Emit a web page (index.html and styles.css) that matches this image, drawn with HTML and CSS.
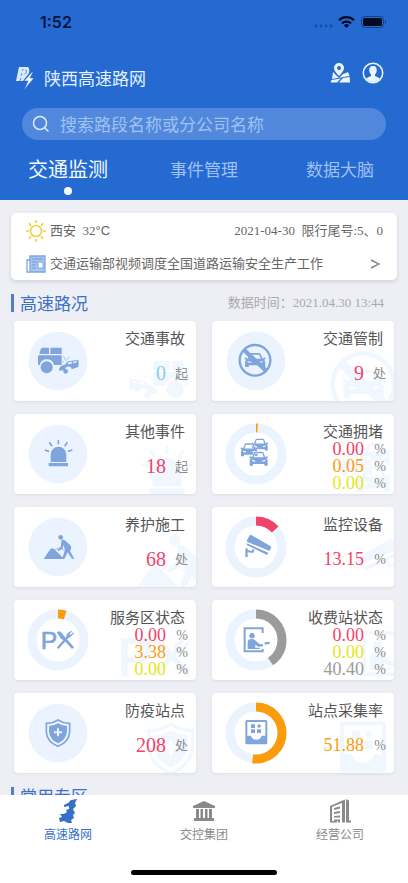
FILE: index.html
```html
<!DOCTYPE html>
<html lang="zh-CN">
<head>
<meta charset="utf-8">
<meta name="viewport" content="width=device-width, initial-scale=1">
<title>陕西高速路网</title>
<link rel="stylesheet" href="styles.css">
</head>
<body>
<svg class="sprite" aria-hidden="true">
  <defs>
    <g id="crash">
      <path d="M43 50H63V69H34L38 55Q39 50 43 50ZM67 50H101V69H67ZM32 73H101V102H78A22 22 0 0 0 35 102H32Q30 102 30 99V76Z"/>
      <circle cx="56" cy="109" r="18"/>
      <path fill-rule="evenodd" d="M93 113Q98 103 110 101L120 91L149 87Q153 88 152 94L151 108L131 115A9 9 0 0 0 112 117L94 119ZM118 100L131 98V92L123 93ZM135 97L147 94V90L135 92Z"/>
      <circle cx="113" cy="121" r="7"/>
      <path d="M107 75L110 86M124 77L113 90M103 89L107 93" fill="none" stroke="currentColor" stroke-width="2"/>
    </g>
    <g id="siren">
      <path d="M68 114V91A23 22 0 0 1 115 91V114ZM62 117H120V127H62Z"/>
      <path d="M91 48V61M64 55L72 67M118 55L110 67M50 78L63 82M133 78L120 82" fill="none" stroke="currentColor" stroke-width="5"/>
    </g>
    <g id="car">
      <path fill-rule="evenodd" d="M9 17L14 4Q15 0 20 0H38Q43 0 44 4L49 17L54 13L58 17L53 20Q56 23 56 29V42H46V37H12V42H2V29Q2 23 5 20L0 17L4 13ZM14 17H44L40 5H18ZM9 24V28L19 30V27ZM49 24V28L39 30V27Z"/>
    </g>
    <g id="nocar">
      <circle cx="87" cy="88" r="46" fill="none" stroke="currentColor" stroke-width="7"/>
      <use href="#car" transform="translate(55 66) scale(1.12 1)"/>
      <path d="M54 57L120 119" stroke="currentColor" stroke-width="13"/>
    </g>
    <g id="jam">
      <use href="#car" transform="translate(76 44) scale(.88 .85)"/>
      <use href="#car" class="cut" transform="translate(43 58) scale(.92 .92)"/>
      <use href="#car" class="cut" transform="translate(69 83)"/>
    </g>
    <g id="worker">
      <path d="M47 126L65 99Q71 90 78 96L105 122V126Z"/>
      <circle cx="98" cy="61" r="7"/>
      <path d="M101 68Q107 66 113 72L127 85Q131 89 129 96L126 102L139 125H132L119 106L109 126H102L111 99L106 84L104 95L91 102L88 98L98 91Z"/>
      <path d="M79 99L95 92L117 104" fill="none" stroke="currentColor" stroke-width="2"/>
    </g>
    <g id="camera">
      <path d="M71 55Q73 53 76 54L133 87Q137 90 135 94L130 102L63 74V70ZM62 79L127 107L123 114L62 84ZM58 94H65V99L76 102L81 96L86 99L81 108L65 106V120H58Z"/>
    </g>
    <g id="dining">
      <text x="38" y="116" font-size="74" font-family="Liberation Sans, sans-serif" stroke="currentColor" stroke-width="2">P</text>
      <path d="M86 66L96 64L138 112L132 117L108 91Q99 89 96 82Z"/>
      <path d="M89 115L119 81" stroke="currentColor" stroke-width="7"/>
      <path d="M117 83Q113 75 120 69L130 62L132 64L124 73L127 75L136 67L138 70L129 79Q123 86 117 83Z"/>
    </g>
    <g id="toll">
      <path d="M110 69V55H56V124H110V117" fill="none" stroke="currentColor" stroke-width="6"/>
      <circle cx="78" cy="77" r="8"/>
      <path d="M65 117V96Q65 87 76 87Q84 86 89 92L100 102L111 103V109L97 110L88 104V113H101V117ZM116 97L131 95V101L116 104Z"/>
    </g>
    <g id="shield">
      <path d="M90 51Q107 62 125 61V86Q124 116 90 130Q56 116 55 86V61Q73 62 90 51Z" fill="none" stroke="currentColor" stroke-width="5"/>
      <path fill-rule="evenodd" d="M90 61Q103 69 117 69V86Q115 109 90 121Q65 109 63 86V69Q77 69 90 61ZM87 76V85H78V91H87V100H93V91H102V85H93V76Z"/>
    </g>
    <g id="station">
      <path fill-rule="evenodd" d="M63 51H119Q124 51 124 56V119Q124 124 119 124H63Q58 124 58 119V56Q58 51 63 51ZM64 57V98H75Q79 110 91 110Q103 110 107 98H118V57Z"/>
      <path d="M75 64H87V75H75ZM75 79H87V90H75ZM93 79H105V90H93ZM93 69L99 63L106 69L99 76Z"/>
    </g>
  </defs>
</svg>

<header class="top">
  <div class="status">
    <span class="clock">1:52</span>
    <svg class="signals" viewBox="0 0 72 14" aria-hidden="true">
      <g fill="#194a9c"><circle cx="2" cy="11" r="1.4"/><circle cx="7" cy="11" r="1.4"/><circle cx="12" cy="11" r="1.4"/><circle cx="17" cy="11" r="1.4"/></g>
      <g fill="none" stroke="#030b23" stroke-width="2.3"><path d="M25 5.3A10.5 10.5 0 0 1 40 5.3"/><path d="M28 8.4A6.5 6.5 0 0 1 37 8.4"/></g>
      <path d="M29.8 10.3A4 4 0 0 1 35.2 10.3L32.5 13Z" fill="#030b23"/>
      <rect x="47.5" y="1.5" width="22" height="11" rx="3" fill="none" stroke="#173f84"/>
      <rect x="49" y="3" width="19" height="8" rx="1.5" fill="#030b23"/>
      <path d="M71 5V9Q72 8 72 7T71 5Z" fill="#173f84"/>
    </svg>
  </div>
  <div class="titlebar">
    <h1 class="brand">
      <svg class="logo" viewBox="0 0 18 24" aria-hidden="true">
        <path d="M3 1H12Q14 3 13 7L10 11L7 15H0Z" fill="#dceaff"/>
        <path d="M7 3L6.500 5M6 7L5 10M5 12L4 15M9 4Q11 4 10.500 6Q10 8 8.500 8" fill="none" stroke="#5d92e2" stroke-width="1"/>
        <path d="M16 6L8 15H12L8 24L18 12H14L17 6Z" fill="#eef7ff" stroke="#256ad1" stroke-width=".5"/>
      </svg>
      <span>陕西高速路网</span>
    </h1>
    <div class="actions">
      <button class="icon-button" type="button" aria-label="地图">
        <svg viewBox="0 0 22 22" aria-hidden="true">
          <path fill="#eaf7ff" fill-rule="evenodd" d="M10 1A5 5 0 0 1 15 6Q15 9 10 14Q5 9 5 6A5 5 0 0 1 10 1ZM10 4A2 2 0 0 0 10 8A2 2 0 0 0 10 4Z"/>
          <path fill="#eaf7ff" d="M4 10L10 16L14 12L17 11L19 10L20.500 14L3 17ZM2.500 18L12 16.500L8 20.500H1.500ZM14 16L20.700 15L21 20.500H10Z"/>
        </svg>
      </button>
      <button class="icon-button" type="button" aria-label="个人中心">
        <svg viewBox="0 0 22 22" aria-hidden="true">
          <circle cx="11" cy="11" r="9.700" fill="none" stroke="#eaf7ff" stroke-width="1.500"/>
          <path fill="#eaf7ff" d="M11 4C14 4 15 6 14.700 9Q14.500 11 13 12.500V14Q16 15 18 16.500Q15 20 11 20T4 16.500Q6 15 9 14V12.500Q7.500 11 7.300 9C7 6 8 4 11 4Z"/>
        </svg>
      </button>
    </div>
  </div>
  <label class="search">
    <svg viewBox="0 0 18 18" aria-hidden="true"><circle cx="8" cy="8" r="6.500"/><path d="M12.700 12.700L16.500 16.500"/></svg>
    <input type="search" aria-label="搜索" placeholder="搜索路段名称或分公司名称">
  </label>
  <nav class="tabs" aria-label="栏目">
    <button class="tab active" type="button">交通监测</button>
    <button class="tab" type="button">事件管理</button>
    <button class="tab" type="button">数据大脑</button>
  </nav>
</header>

<main class="content">
  <section class="notice">
    <div class="notice-row">
      <svg class="notice-icon" viewBox="0 0 22 24" aria-hidden="true">
        <g fill="none" stroke="#f3d043" stroke-width="1.600"><circle cx="11" cy="12" r="5.500"/><path d="M11 1V4M11 20V23M1 12H4M18 12H21M4 4L6 7M18 4L16 7M4 20L6 17M18 20L16 17"/></g>
      </svg>
      <span>西安&nbsp; 32<span class="degree">°C</span></span>
      <span class="push">2021-04-30&nbsp; 限行尾号:5、0</span>
    </div>
    <a class="notice-row" href="#news">
      <svg class="notice-icon" viewBox="0 0 22 24" aria-hidden="true">
        <path d="M5 4H20V20H5Z" fill="#a9c6ef"/>
        <path d="M5 8H2V20H20V4H5V19" fill="none" stroke="#7fa6df" stroke-width="1.300"/>
        <path d="M7 7H18M7 10H12M7 13H11M7 16H11" stroke="#7fa6df" stroke-width="1.300"/><path d="M13 10H18V16H13Z" fill="#fff" stroke="#7fa6df"/>
      </svg>
      <span>交通运输部视频调度全国道路运输安全生产工作</span>
      <svg class="chevron push" viewBox="0 0 10 12" aria-hidden="true"><path d="M1 2L9 6L1 10"/></svg>
    </a>
  </section>

  <div class="section-head">
    <h2>高速路况</h2>
    <span>数据时间：2021.04.30 13:44</span>
  </div>

  <section class="cards">
    <article class="card">
      <svg class="mark" viewBox="0 0 210 180" aria-hidden="true"><use href="#crash" transform="translate(228 -12) scale(-1.44 1.44)"/></svg>
      <svg class="dial" viewBox="-3 -3 186 186" aria-hidden="true"><circle class="disc" cx="90" cy="90" r="88"/><use href="#crash"/></svg>
      <div class="info"><h3>交通事故</h3><div class="figures"><p class="cyan"><b>0</b><i>起</i></p></div></div>
    </article>
    <article class="card">
      <svg class="mark" viewBox="0 0 210 180" aria-hidden="true"><use href="#nocar" transform="translate(-56 -46) scale(2)"/></svg>
      <svg class="dial" viewBox="-3 -3 186 186" aria-hidden="true"><circle class="disc" cx="90" cy="90" r="88"/><use href="#nocar"/></svg>
      <div class="info"><h3>交通管制</h3><div class="figures"><p class="red"><b>9</b><i>处</i></p></div></div>
    </article>
    <article class="card">
      <svg class="mark" viewBox="0 0 210 180" aria-hidden="true"><use href="#siren" transform="translate(-46 -54) scale(1.85)"/></svg>
      <svg class="dial" viewBox="-3 -3 186 186" aria-hidden="true"><circle class="disc" cx="90" cy="90" r="88"/><use href="#siren"/></svg>
      <div class="info"><h3>其他事件</h3><div class="figures"><p class="red"><b>18</b><i>起</i></p></div></div>
    </article>
    <article class="card">
      <svg class="mark" viewBox="0 0 210 180" aria-hidden="true"><use href="#jam" transform="translate(-27 -52) scale(1.8)"/></svg>
      <svg class="dial" viewBox="-3 -3 186 186" aria-hidden="true"><circle class="ring" cx="90" cy="90" r="78"/><circle class="arc orange" cx="90" cy="90" r="78" pathLength="100" stroke-dasharray="1 99"/><use href="#jam"/></svg>
      <div class="info"><h3>交通拥堵</h3><div class="figures rates"><p class="red"><b>0.00</b><i>%</i></p><p class="orange"><b>0.05</b><i>%</i></p><p class="yellow"><b>0.00</b><i>%</i></p></div></div>
    </article>
    <article class="card">
      <svg class="mark" viewBox="0 0 210 180" aria-hidden="true"><use href="#worker" transform="translate(-88 -108) scale(2.4)"/></svg>
      <svg class="dial" viewBox="-3 -3 186 186" aria-hidden="true"><circle class="disc" cx="90" cy="90" r="88"/><use href="#worker"/></svg>
      <div class="info"><h3>养护施工</h3><div class="figures"><p class="red"><b>68</b><i>处</i></p></div></div>
    </article>
    <article class="card">
      <svg class="mark" viewBox="0 0 210 180" aria-hidden="true"><use href="#camera" transform="translate(323 -52) scale(-1.6 1.6)"/></svg>
      <svg class="dial" viewBox="-3 -3 186 186" aria-hidden="true"><circle class="ring" cx="90" cy="90" r="78"/><circle class="arc red" cx="90" cy="90" r="78" pathLength="100" stroke-dasharray="13.15 86.85"/><use href="#camera"/></svg>
      <div class="info"><h3>监控设备</h3><div class="figures rates"><p class="red"><b>13.15</b><i>%</i></p></div></div>
    </article>
    <article class="card">
      <svg class="mark" viewBox="0 0 210 180" aria-hidden="true"><use href="#dining" transform="translate(-109 -87) scale(2.2)"/></svg>
      <svg class="dial" viewBox="-3 -3 186 186" aria-hidden="true"><circle class="ring" cx="90" cy="90" r="78"/><circle class="arc orange" cx="90" cy="90" r="78" pathLength="100" stroke-dasharray="4.5 95.5"/><use href="#dining"/></svg>
      <div class="info"><h3>服务区状态</h3><div class="figures rates"><p class="red"><b>0.00</b><i>%</i></p><p class="orange"><b>3.38</b><i>%</i></p><p class="yellow"><b>0.00</b><i>%</i></p></div></div>
    </article>
    <article class="card">
      <svg class="mark" viewBox="0 0 210 180" aria-hidden="true"><use href="#toll" transform="translate(20 -60) scale(1.8)"/></svg>
      <svg class="dial" viewBox="-3 -3 186 186" aria-hidden="true"><circle class="ring" cx="90" cy="90" r="78"/><circle class="arc gray" cx="90" cy="90" r="78" pathLength="100" stroke-dasharray="40.4 59.6"/><use href="#toll"/></svg>
      <div class="info"><h3>收费站状态</h3><div class="figures rates"><p class="red"><b>0.00</b><i>%</i></p><p class="yellow"><b>0.00</b><i>%</i></p><p class="gray"><b>40.40</b><i>%</i></p></div></div>
    </article>
    <article class="card">
      <svg class="mark" viewBox="0 0 210 180" aria-hidden="true"><use href="#shield" transform="translate(-34 -62) scale(1.87)"/></svg>
      <svg class="dial" viewBox="-3 -3 186 186" aria-hidden="true"><circle class="disc" cx="90" cy="90" r="88"/><use href="#shield"/></svg>
      <div class="info"><h3>防疫站点</h3><div class="figures"><p class="red"><b>208</b><i>处</i></p></div></div>
    </article>
    <article class="card">
      <svg class="mark" viewBox="0 0 210 180" aria-hidden="true"><use href="#station" transform="translate(-74 -82) scale(2.1)"/></svg>
      <svg class="dial" viewBox="-3 -3 186 186" aria-hidden="true"><circle class="ring" cx="90" cy="90" r="78"/><circle class="arc orange" cx="90" cy="90" r="78" pathLength="100" stroke-dasharray="51.88 48.12"/><use href="#station"/></svg>
      <div class="info"><h3>站点采集率</h3><div class="figures rates"><p class="orange"><b>51.88</b><i>%</i></p></div></div>
    </article>
  </section>

  <div class="section-head">
    <h2>常用专区</h2>
  </div>
</main>

<footer class="bottom">
  <nav class="dock" aria-label="主导航">
    <a class="dock-item current" href="#network">
      <svg viewBox="0 0 26 26" aria-hidden="true"><path d="M22 1L20 5L21 8L18 11L20 15L18 17L19 20L16 22L17 25L13 25L9 23L5 24L4 20L7 19L5 16L9 16L12 14L11 12L14 11L14 8L9 9L9 7L13 5L16 2Z"/></svg>
      <span>高速路网</span>
    </a>
    <a class="dock-item" href="#group">
      <svg viewBox="0 0 26 26" aria-hidden="true"><path d="M13 3L24 8V10H2V8ZM5 11H8V20H5ZM9.500 11H12V20H9.500ZM14 11H16.500V20H14ZM18 11H21V20H18ZM3 20H23V23H3Z"/></svg>
      <span>交控集团</span>
    </a>
    <a class="dock-item" href="#company">
      <svg viewBox="0 0 26 26" aria-hidden="true"><path d="M3 8L12 4V6L5 9V23H10V24.500H3ZM12 4L18 1.500V24.500H15V5L12 6ZM19 1L22 2.500V22.500H24V24.500H19ZM7 10L13 8.500V10.500L7 12ZM7 14L13 13V15L7 16ZM7 18L13 17.500V19.500H7ZM7 21.500H13V24.500H11V23H7Z"/></svg>
      <span>经营公司</span>
    </a>
  </nav>
  <div class="home-bar"></div>
</footer>
</body>
</html>
```
FILE: styles.css
```css
:root {
  --blue: #256ad1;
  --icon: #7fa5dc;
  --pale: #eaf3fe;
  --text: #666;
  --sans: "Noto Sans CJK SC", sans-serif;
  --mixed: "Liberation Serif", "Noto Sans CJK SC", serif;
}

* {
  box-sizing: border-box;
}

body {
  display: flex;
  flex-direction: column;
  height: 100vh;
  margin: 0;
  background: #eeeef5;
  color: var(--text);
  font-family: var(--sans);
  font-weight: 400;
}

h1, h2, h3, p {
  margin: 0;
  font-weight: inherit;
}

a {
  color: inherit;
  text-decoration: none;
}

button {
  padding: 0;
  border: 0;
  background: none;
  font: inherit;
}

svg {
  display: block;
  flex: none;
}

.sprite {
  position: absolute;
  width: 0;
  height: 0;
}

/* Header */
.top {
  flex: none;
  padding-bottom: 5px;
  background: var(--blue);
}

.status {
  display: flex;
  align-items: center;
  justify-content: space-between;
  height: 44px;
  padding: 0 22px 0 40px;
}

.clock {
  color: #071640;
  font: 600 16px/20px Inter, sans-serif;
}

.signals {
  width: 72px;
  height: 14px;
}

.titlebar {
  display: flex;
  justify-content: space-between;
  height: 28px;
  margin: 18px 24px 18px 16px;
}

.brand {
  display: flex;
  align-items: center;
  align-self: flex-end;
  gap: 10px;
  color: #e4f1ff;
  font-size: 17px;
  line-height: 24px;
}

.logo {
  width: 18px;
  height: 24px;
}

.actions {
  display: flex;
  gap: 11px;
}

.icon-button,
.icon-button svg {
  width: 22px;
  height: 22px;
}

.search {
  display: flex;
  align-items: center;
  gap: 10px;
  height: 32px;
  margin: 0 22px;
  padding: 0 10px;
  border-radius: 16px;
  background: #5188dc;
}

.search svg {
  width: 18px;
  height: 18px;
  fill: none;
  stroke: #dcecff;
  stroke-width: 1.5;
}

.search input {
  flex: 1;
  min-width: 0;
  padding: 0;
  border: 0;
  outline: 0;
  background: none;
  color: #fff;
  font: 400 17px/24px var(--sans);
}

.search input::placeholder {
  color: #a0c1f3;
  opacity: 1;
}

.tabs {
  display: grid;
  grid-template-columns: repeat(3, 1fr);
  margin-top: 15px;
}

.tab {
  display: flex;
  flex-direction: column;
  align-items: center;
  gap: 4px;
  color: #a0c1f3;
  font-size: 17px;
  line-height: 28px;
}

.tab::after {
  width: 8px;
  height: 8px;
  border-radius: 50%;
  content: "";
}

.tab.active {
  color: #f2fbff;
  font-size: 20px;
}

.tab.active::after {
  background: #f2fbff;
}

/* Content */
.content {
  flex: 1;
  min-height: 0;
  overflow: hidden;
  padding-top: 13px;
}

.notice {
  display: grid;
  gap: 1px;
  margin: 0 11px;
  padding: 2px 14px 0;
  border-radius: 5px;
  background: #fff;
  box-shadow: 0 2px 4px #d2d2dc;
  font: 400 13px/20px var(--mixed);
}

.notice-row {
  display: flex;
  align-items: center;
  gap: 3px;
  height: 32px;
}

.notice-icon {
  width: 22px;
  height: 24px;
}

.degree {
  font-family: "Liberation Sans", sans-serif;
}

.push {
  margin-left: auto;
}

.chevron {
  width: 10px;
  height: 12px;
  margin-right: 3px;
  fill: none;
  stroke: #888;
  stroke-width: 1.5;
}

.section-head {
  display: flex;
  align-items: center;
  justify-content: space-between;
  margin: 11px 24px 6px 11px;
  color: #aaa;
  font: 400 13px/24px var(--mixed);
}

.section-head h2 {
  display: flex;
  align-items: center;
  gap: 6px;
  color: #3c70c3;
  font: 400 17px/24px var(--sans);
}

.section-head h2::before {
  width: 3px;
  height: 18px;
  background: #4c7fd0;
  content: "";
}

.cards {
  display: grid;
  grid-template-columns: 1fr 1fr;
  gap: 13px 16px;
  padding: 0 14px;
}

.card {
  position: relative;
  display: flex;
  align-items: center;
  min-height: 80px;
  overflow: hidden;
  padding-left: 13px;
  border-radius: 4px;
  background: #fff;
  box-shadow: 0 1px 3px #dcdce4;
}

.dial {
  width: 62px;
  height: 62px;
  color: var(--icon);
  fill: currentColor;
}

.disc {
  fill: var(--pale);
}

.ring,
.arc {
  fill: none;
  stroke: var(--pale);
  stroke-width: 27;
}

.arc {
  stroke: currentColor;
  transform: rotate(-90deg);
  transform-origin: 90px 90px;
}

.cut {
  stroke: #fff;
  stroke-width: 3;
  paint-order: stroke;
}

.mark {
  position: absolute;
  right: 0;
  bottom: 0;
  width: 70px;
  height: 60px;
  overflow: visible;
  color: #f1f7fe;
  fill: currentColor;
}

.info {
  position: relative;
  display: flex;
  flex: 1;
  flex-direction: column;
  align-self: stretch;
  padding: 7px 8px 2px 0;
}

.info h3 {
  padding-right: 3px;
  color: #555;
  font-size: 15px;
  line-height: 20px;
  text-align: right;
}

.figures {
  display: flex;
  flex: 1;
  flex-direction: column;
  justify-content: center;
  font: 400 20px/17px var(--mixed);
}

.figures p {
  display: flex;
  align-items: center;
  justify-content: flex-end;
}

.figures b {
  font-weight: inherit;
}

.figures i {
  width: 22px;
  color: #8c8c8c;
  font-size: 13px;
  font-style: normal;
  text-align: right;
}

.rates {
  font-size: 18px;
}

.rates i {
  font-size: 14px;
}

.red { color: #f0436a; }
.orange { color: #fb9c0c; }
.yellow { color: #e6e613; }
.gray { color: #9b9b9b; }
.cyan { color: #8ccdea; }

/* Bottom navigation */
.bottom {
  display: flex;
  flex: none;
  flex-direction: column;
  align-items: center;
  gap: 27px;
  padding: 3px 0 8px;
  background: #fff;
}

.dock {
  display: grid;
  grid-template-columns: repeat(3, 1fr);
  width: 100%;
}

.dock-item {
  display: flex;
  flex-direction: column;
  align-items: center;
  gap: 1px;
  color: #8a8a8a;
  font-size: 12px;
  line-height: 18px;
}

.dock-item svg {
  width: 26px;
  height: 26px;
  fill: currentColor;
}

.dock-item.current {
  color: #386fc8;
}

.home-bar {
  width: 36%;
  height: 5px;
  border-radius: 3px;
  background: #000;
}
```
